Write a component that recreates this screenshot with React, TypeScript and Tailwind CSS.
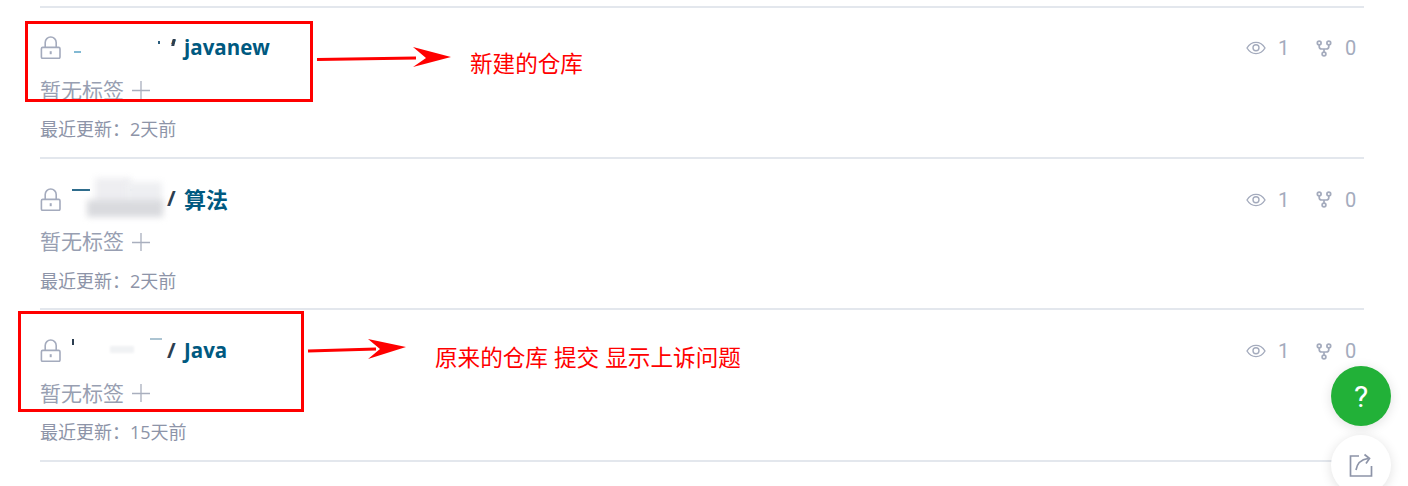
const cjk = "font-['Open_Sans','Noto_Sans_CJK_SC',sans-serif]";

function Lock() {
  return (
    <svg width="22" height="24" viewBox="0 0 22 24" fill="none" stroke="#a4abbd" strokeWidth="1.6" className="shrink-0">
      <rect x="1.400" y="12.400" width="18.600" height="11" rx="1.400" />
      <path d="M5.200 12.400V7.500a5.500 5.500 0 0 1 11 0v4.900" />
      <path d="M10.700 16.200v3" strokeWidth="2" />
    </svg>
  );
}

function Eye() {
  return (
    <svg width="20" height="14" viewBox="0 0 20 14" fill="none" stroke="#a4abbd" strokeWidth="1.400">
      <path d="M1 7c2.200-3.600 5.200-5.600 9-5.600s6.800 2 9 5.600c-2.200 3.600-5.200 5.600-9 5.600S3.200 10.600 1 7Z" />
      <circle cx="10" cy="6.800" r="3" />
    </svg>
  );
}

function Fork() {
  return (
    <svg width="16" height="17" viewBox="0 0 16 17" fill="none" stroke="#a4abbd" strokeWidth="1.700">
      <circle cx="3.200" cy="3" r="1.900" />
      <circle cx="12.800" cy="3" r="1.900" />
      <circle cx="8" cy="14" r="1.900" />
      <path d="M3.200 5v1.500c0 1.800 1 2.500 2.500 2.500h4.600c1.500 0 2.500-.7 2.500-2.500V5M8 9v3" />
    </svg>
  );
}

function Row({ name, nameClass, updated, mask }: { name: string; nameClass: string; updated: string; mask: React.ReactNode }) {
  return (
    <div className={`flex h-[151.500px] justify-between border-b-2 border-[#e3e7ed] pt-[27px] ${cjk}`}>
      <div className="flex flex-col">
        <div className="relative flex h-[26px] items-center">
          <Lock />
          <span className="ml-[105px] w-[17px] text-[21px] font-bold leading-none text-[#2c3e50]">/</span>
          <span className={`font-bold leading-none text-[#005980] ${nameClass}`}>{name}</span>
          {mask}
        </div>
        <div className="mt-[16px] flex h-[28px] items-center text-[21px] leading-none text-[#989fb2]">
          <span>暂无标签</span>
          <svg width="18" height="18" viewBox="0 0 18 18" className="ml-[8px]" stroke="#a9afbe" strokeWidth="1.300">
            <path d="M0 9.500h18M9 0v18" />
          </svg>
        </div>
        <div className="mt-[13px] text-[18px] leading-[24px] text-[#8d94a8]">最近更新：{updated}</div>
      </div>
      <div className="mr-[8px] mt-[1px] flex h-[26px] items-center font-['Roboto',sans-serif] text-[20px] text-[#a4abbd]">
        <Eye />
        <span className="ml-[12px] w-[10px]">1</span>
        <span className="ml-[28px]"><Fork /></span>
        <span className="ml-[13px] w-[11px]">0</span>
      </div>
    </div>
  );
}

function Arrow({ className, d, head }: { className: string; d: string; head: string }) {
  return (
    <svg className={className} viewBox="0 0 140 30" width="140" height="30" fill="#ff0000">
      <path d={d} stroke="#ff0000" strokeWidth="3" />
      <path d={head} />
    </svg>
  );
}

export default function App() {
  return (
    <div className="relative h-[486px] w-[1408px] overflow-hidden bg-white">
      <div className="ml-[40px] w-[1324px] pt-[6px]">
        <div className="h-[2px] bg-[#e3e7ed]" />
        <div className="-mt-[1px] flex flex-col">
          <Row
            name="javanew"
            nameClass="text-[20.500px]"
            updated="2天前"
            mask={
              <>
                <span className="absolute left-[126px] top-[10px] h-[16px] w-[12px] bg-white" />
                <span className="absolute left-[132px] top-[5px] h-[7px] w-[3px] -skew-x-12 bg-[#2c3e50]" />
                <span className="absolute left-[34px] top-[17px] h-[2px] w-[7px] bg-[#4d9bc0] opacity-70" />
                <span className="absolute left-[118px] top-[7px] h-[3px] w-[2px] bg-[#2c5d7d]" />
              </>
            }
          />
          <Row
            name="算法"
            nameClass="text-[22px]"
            updated="2天前"
            mask={
              <>
                <span className="absolute left-[32px] top-[3px] h-[2px] w-[18px] bg-[#2e6c8c]" />
                <span className="absolute left-[90px] top-[3px] h-[2px] w-[18px] bg-[#5d97b5] opacity-70" />
                <span className="absolute left-[55px] top-[-8px] h-[28px] w-[36px] bg-[#eeeef1] blur-[3px]" />
                <span className="absolute left-[86px] top-[-4px] h-[24px] w-[36px] bg-[#eeeff2] blur-[3px]" />
                <span className="absolute left-[47px] top-[14px] h-[17px] w-[76px] bg-[#d9dade] blur-[3px]" />
              </>
            }
          />
          <Row
            name="Java"
            nameClass="text-[20.500px]"
            updated="15天前"
            mask={
              <>
                <span className="absolute left-[32px] top-[2px] h-[6px] w-[2px] bg-[#2c3e50]" />
                <span className="absolute left-[110px] top-[1px] h-[2px] w-[12px] bg-[#5a8aa5] opacity-50" />
                <span className="absolute left-[70px] top-[9px] h-[7px] w-[24px] bg-[#e3e6ea] opacity-50 blur-[1px]" />
              </>
            }
          />
        </div>
      </div>

      {/* annotations drawn over the screenshot */}
      <div className="absolute left-[25px] top-[21px] h-[81px] w-[288px] border-[3px] border-[#ff0000]" />
      <div className="absolute left-[18px] top-[311px] h-[101px] w-[286px] border-[3px] border-[#ff0000]" />
      <Arrow className="absolute left-[316px] top-[43px]" d="M1 16.500 L100 15" head="M97 4 L135 14 L97 24 L110 15 Z" />
      <Arrow className="absolute left-[306px] top-[334px]" d="M2 17 L70 15" head="M62 5 L100 13 L62 25 L74 15 Z" />
      <span className="absolute left-[470px] top-[48px] font-['Noto_Sans_CJK_SC',sans-serif] text-[22.600px] leading-[30px] text-[#ff0000]">新建的仓库</span>
      <span className="absolute left-[435px] top-[342px] whitespace-pre font-['Noto_Sans_CJK_SC',sans-serif] text-[22.600px] leading-[30px] text-[#ff0000] [word-spacing:1px]">原来的仓库 提交 显示上诉问题</span>

      {/* floating buttons */}
      <button className="absolute left-[1331px] top-[366px] flex h-[60px] w-[60px] items-center justify-center rounded-full bg-[#22b138] font-['Roboto',sans-serif] text-[30px] font-normal text-white shadow-[0_2px_12px_rgba(0,0,0,0.12)]">?</button>
      <button className="absolute left-[1331px] top-[435px] flex h-[60px] w-[60px] items-center justify-center rounded-full bg-white shadow-[0_2px_12px_rgba(0,0,0,0.12)]">
        <svg width="24" height="24" viewBox="0 0 24 24" fill="none" stroke="#8d94a8" strokeWidth="1.700">
          <path d="M10 3H1.500v20h21v-10" />
          <path d="M7 17c1-6 5-10.500 12-11.500M15.500 1.500 20.500 5.500 17 10.500" />
        </svg>
      </button>
    </div>
  );
}
